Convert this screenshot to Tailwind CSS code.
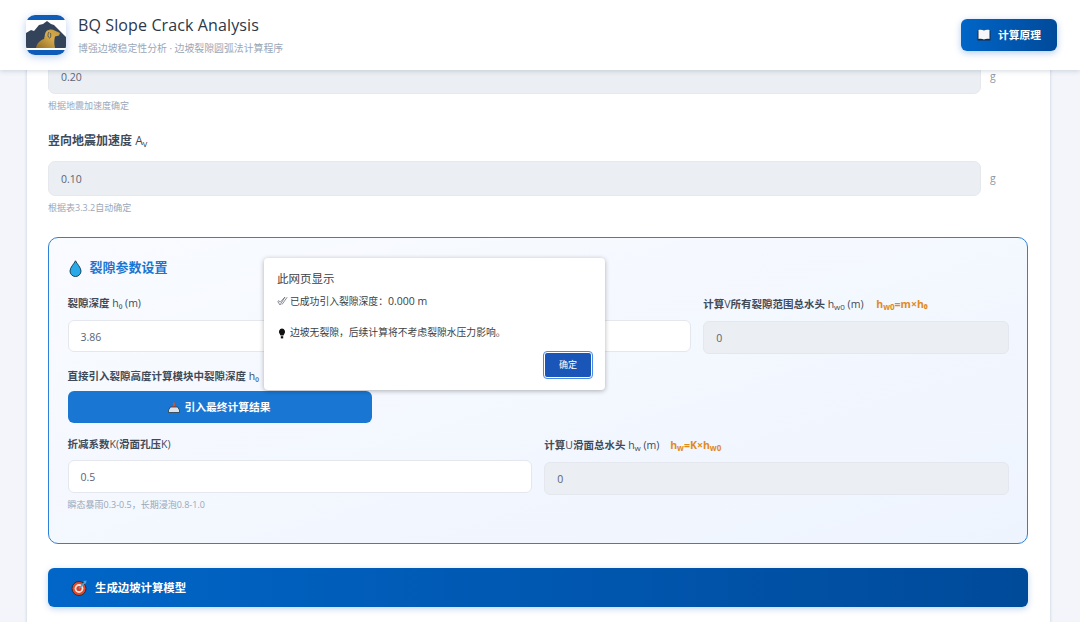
<!DOCTYPE html>
<html lang="zh-CN">
<head>
  <meta charset="UTF-8" />
  <meta name="viewport" content="width=device-width, initial-scale=1.0"/>
  <title>BQ Slope Crack Analysis</title>
  <script src="https://cdn.jsdelivr.net/npm/@tailwindcss/browser@4"></script>
</head>
<body class="bg-[#f3f5fa] text-[#3f4a59] font-['Open_Sans','Noto_Sans_CJK_SC',sans-serif]">
<div class="relative h-[622px] w-[1080px] overflow-hidden flex flex-col">

  <!-- Header -->
  <header class="relative z-10 h-[70px] shrink-0 bg-white shadow-[0_1px_5px_rgba(60,80,120,0.22)] flex items-center justify-between pl-[26px] pr-[23px]">
    <div class="flex items-center gap-[12px]">
      <svg class="w-[40px] h-[40px] rounded-[9px] shadow-[0_2px_8px_rgba(25,100,210,0.3)]" viewBox="0 0 40 40">
        <defs>
          <linearGradient id="dogGold" x1="0" y1="1" x2="1" y2="0">
            <stop offset="0" stop-color="#8f6a22"/>
            <stop offset="0.6" stop-color="#d9ad4e"/>
            <stop offset="1" stop-color="#c0953a"/>
          </linearGradient>
        </defs>
        <rect width="40" height="40" fill="#ffffff"/>
        <rect width="40" height="5" fill="#0f5cb8"/>
        <rect y="35" width="40" height="5" fill="#0f5cb8"/>
        <path d="M0 18 L5 15 L8 16 L13 10 L17 9 L21 6 L25 9 L28 10 L40 22 V33 H0 Z" fill="#33445a"/>
        <path d="M10 33 C11 28 14 25.5 18 24 C19 21 18.5 18 20.5 16 C23 14 26.5 14 28.5 15.5 L34 18 L33 20.5 L29 21.5 C28 25 28 29 29 33 Z" fill="url(#dogGold)"/>
        <path d="M23 17 C21.5 19 21.5 22 23.5 23 C25 23 25 20 24.5 18" fill="none" stroke="#33445a" stroke-width="0.8"/>
      </svg>
      <div>
        <h1 class="-mt-[1px] text-[16px] leading-[22px] font-medium text-[#2d3748] tracking-[0.12px]">BQ Slope Crack Analysis</h1>
        <p class="text-[9.9px] leading-[14px] mt-[5px] text-[#9aa7b8]">博强边坡稳定性分析 · 边坡裂隙圆弧法计算程序</p>
      </div>
    </div>
    <button class="h-[32px] w-[96px] rounded-[6px] bg-gradient-to-r from-[#0066c8] to-[#004a9a] text-white text-[10.75px] font-bold shadow-[0_2px_7px_rgba(0,90,190,0.3)] flex items-center justify-center gap-[7px]">
      <svg class="w-[14px] h-[12px]" viewBox="0 0 14 12">
        <path d="M0.5 1.5 H13.5 V11.5 H0.5 Z" fill="#1c2b3c"/>
        <path d="M1.5 1 C3.5 0.5 5.5 0.7 7 1.5 C8.5 0.7 10.5 0.5 12.5 1 V10 C10.5 9.6 8.5 9.8 7 10.5 C5.5 9.8 3.5 9.6 1.5 10 Z" fill="#f5f7fa"/>
      </svg>
      计算原理
    </button>
  </header>

  <!-- Scrolled content -->
  <main class="flex-1 overflow-hidden px-[27px]">
    <section class="mr-[3px] min-h-full bg-white pl-[21px] pr-[22px] pb-[20px] shadow-[0_0_3px_rgba(60,80,120,0.25)]">

      <div class="-mt-[11px] flex items-center">
        <div class="flex-1 h-[35px] rounded-[7px] bg-[#ebeef2] border border-[#e5e8ed] pl-[12px] pt-[2px] flex items-center text-[10.5px] text-[#5a6472]">0.20</div>
        <span class="w-[47px] pl-[9px] pt-[1px] text-[10.5px] text-[#8d98a8]">g</span>
      </div>
      <p class="mt-[5px] h-[14px] text-[9px] leading-[14px] text-[#9aa7b8]">根据地震加速度确定</p>

      <label class="mt-[18px] h-[20px] block text-[12px] leading-[20px] font-bold">竖向地震加速度 <span class="font-normal">A<sub class="text-[9px]">v</sub></span></label>
      <div class="mt-[10px] flex items-center">
        <div class="flex-1 h-[35px] rounded-[7px] bg-[#ebeef2] border border-[#e5e8ed] pl-[12px] pt-[2px] flex items-center text-[10.5px] text-[#5a6472]">0.10</div>
        <span class="w-[47px] pl-[9px] pt-[1px] text-[10.5px] text-[#8d98a8]">g</span>
      </div>
      <p class="mt-[5px] h-[14px] text-[9px] leading-[14px] text-[#9aa7b8]">根据表3.3.2自动确定</p>

      <!-- Crack parameters -->
      <div class="mt-[22px] h-[307px] rounded-[10px] border border-[#2f80d8] bg-gradient-to-br from-[#f9fbff] to-[#eef4fe] pl-[18.5px] pr-[18px] pt-[20px]">
        <div class="h-[20px] flex items-center gap-[8px] pl-[1px]">
          <svg class="w-[13px] h-[17px]" viewBox="0 0 13 17">
            <path d="M6.5 0.8 C8 4 12 7.5 12 11 A5.5 5.5 0 0 1 1 11 C1 7.5 5 4 6.5 0.8 Z" fill="#29a9e8" stroke="#16465f" stroke-width="1"/>
          </svg>
          <h2 class="text-[13px] font-bold text-[#1976d2]">裂隙参数设置</h2>
        </div>

        <div class="mt-[17px] grid grid-cols-3 gap-x-3">
          <div>
            <label class="h-[16px] block text-[10.5px] leading-[16px] font-bold">裂隙深度 <span class="font-normal">h₀ (m)</span></label>
            <div class="mt-[9px] h-[32px] rounded-[6px] bg-white border border-[#e4e8ee] pl-[12px] pt-[3px] flex items-center text-[10.5px] text-[#5a6472]">3.86</div>
          </div>
          <div>
            <div class="h-[16px]"></div>
            <div class="mt-[9px] h-[32px] rounded-[6px] bg-white border border-[#e4e8ee]"></div>
          </div>
          <div>
            <label class="h-[16px] mt-[1px] block text-[10.5px] leading-[16px] font-bold whitespace-nowrap">计算<span class="font-normal">V</span>所有裂隙范围总水头 <span class="font-normal">h<sub class="text-[8px]">w0</sub> (m)</span> <span class="ml-[10px] text-[#e08a1e]">h<sub class="text-[8px]">w0</sub>=m×h₀</span></label>
            <div class="mt-[9px] h-[33px] rounded-[6px] bg-[#ebeef2] border border-[#e4e8ee] pl-[12px] pt-[3px] flex items-center text-[10.5px] text-[#5a6472]">0</div>
          </div>
        </div>

        <div class="mt-[14px] w-[304px]">
          <label class="h-[16px] block text-[10.5px] leading-[16px] font-bold whitespace-nowrap">直接引入裂隙高度计算模块中裂隙深度 <span class="font-normal">h₀</span></label>
          <button class="mt-[7px] h-[32px] w-full rounded-[6px] bg-[#1976d2] text-white text-[10.75px] font-bold flex items-center justify-center gap-[4px]">
            <svg class="w-[12px] h-[11px]" viewBox="0 0 12 11">
              <path d="M6 0.5 V5" stroke="#c2553f" stroke-width="2"/>
              <path d="M3.5 4 H8.5 L6 6.5 Z" fill="#c2553f"/>
              <path d="M2.5 5 H9.5 L11.5 8 V10.5 H0.5 V8 Z" fill="#dbe3ea" stroke="#2b3a4a" stroke-width="0.8"/>
            </svg>
            引入最终计算结果
          </button>
        </div>

        <div class="mt-[13px] grid grid-cols-2 gap-x-3">
          <div>
            <label class="h-[16px] block text-[10.5px] leading-[16px] font-bold">折减系数<span class="font-normal">K(</span>滑面孔压<span class="font-normal">K)</span></label>
            <div class="mt-[8px] h-[33px] rounded-[6px] bg-white border border-[#e4e8ee] pl-[12px] pt-[2px] flex items-center text-[10.5px] text-[#5a6472]">0.5</div>
            <p class="mt-[5px] h-[14px] text-[9px] leading-[14px] text-[#9aa7b8]">瞬态暴雨0.3-0.5，长期浸泡0.8-1.0</p>
          </div>
          <div>
            <label class="h-[16px] mt-[1px] block text-[10.5px] leading-[16px] font-bold whitespace-nowrap">计算<span class="font-normal">U</span>滑面总水头 <span class="font-normal">h<sub class="text-[8px]">w</sub> (m)</span> <span class="ml-[8px] text-[#e08a1e]">h<sub class="text-[8px]">w</sub>=K×h<sub class="text-[8px]">w0</sub></span></label>
            <div class="mt-[9px] h-[33px] rounded-[6px] bg-[#ebeef2] border border-[#e4e8ee] pl-[12px] pt-[2px] flex items-center text-[10.5px] text-[#5a6472]">0</div>
          </div>
        </div>
      </div>

      <!-- Generate model -->
      <div class="mt-[24px] h-[39px] rounded-[6px] bg-gradient-to-r from-[#0066c8] to-[#004a9a] shadow-[0_2px_6px_rgba(0,90,190,0.25)] pl-[23px] flex items-center gap-[8px] text-white text-[11.4px] font-bold">
        <svg class="w-[16px] h-[16px]" viewBox="0 0 16 16">
          <circle cx="8" cy="8.5" r="7" fill="#e2492f" stroke="#2b2f38" stroke-width="1"/>
          <circle cx="8" cy="8.5" r="4.4" fill="#f4e4d8"/>
          <circle cx="8" cy="8.5" r="2.6" fill="#d83f28"/>
          <path d="M8 8.5 L14 2.5" stroke="#4ba3d9" stroke-width="1.4"/>
          <path d="M12.5 1 L15.5 0.5 L15 3.5 L13 3 Z" fill="#4ba3d9"/>
        </svg>
        生成边坡计算模型
      </div>
    </section>
  </main>

  <!-- Browser alert -->
  <div class="absolute z-20 left-[264px] top-[258px] w-[341px] h-[132px] rounded-[4px] bg-white shadow-[0_1px_5px_rgba(0,0,0,0.3)] px-[13px] pt-[13px]">
    <h3 class="text-[11.5px] leading-[16px] text-[#3c4043]">此网页显示</h3>
    <p class="mt-[7px] h-[14px] flex items-center gap-[2px] text-[9.8px] leading-[14px] text-[#3c4043]">
      <svg class="w-[11px] h-[10px]" viewBox="0 0 11 10"><path d="M0.8 5.5 L3 9 L8 1 L3.2 6.2 L2 4.6 Z M5 8.5 L10.2 1.2" fill="none" stroke="#6b7280" stroke-width="0.8"/></svg>
      <span>已成功引入裂隙深度：<span class="text-[10.5px]">0.000 m</span></span>
    </p>
    <p class="mt-[18px] h-[14px] flex items-center gap-[3px] text-[9.8px] leading-[14px] text-[#3c4043]">
      <svg class="w-[10px] h-[11px]" viewBox="0 0 10 11"><path d="M5 0.5 A3.4 3.4 0 0 1 7.3 6 L6.4 7.6 H3.6 L2.7 6 A3.4 3.4 0 0 1 5 0.5 Z" fill="#111"/><rect x="3.8" y="8.2" width="2.4" height="2.2" fill="#111"/></svg>
      边坡无裂隙，后续计算将不考虑裂隙水压力影响。
    </p>
    <div class="mt-[12px] flex justify-end">
      <button class="h-[26px] w-[48px] rounded-[3px] bg-[#1a56b8] border border-white outline-[1.5px] outline-[#4a8ae0] text-white text-[9px]">确定</button>
    </div>
  </div>
</div>
</body>
</html>
